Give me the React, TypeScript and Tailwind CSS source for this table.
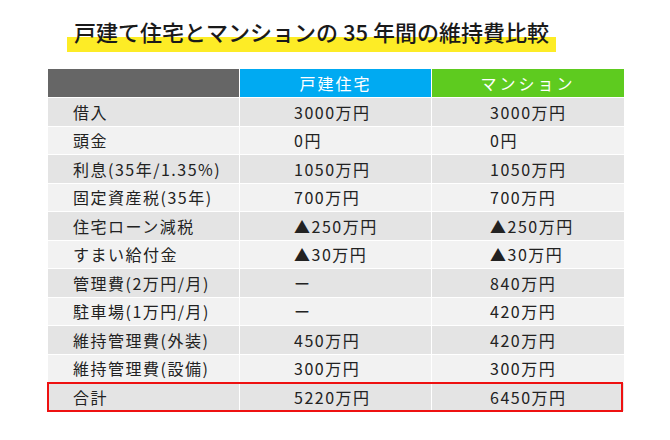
const rows = [
  ['借入', '3000万円', '3000万円'],
  ['頭金', '0円', '0円'],
  ['利息(35年/1.35%)', '1050万円', '1050万円'],
  ['固定資産税(35年)', '700万円', '700万円'],
  ['住宅ローン減税', '▲250万円', '▲250万円'],
  ['すまい給付金', '▲30万円', '▲30万円'],
  ['管理費(2万円/月)', 'ー', '840万円'],
  ['駐車場(1万円/月)', 'ー', '420万円'],
  ['維持管理費(外装)', '450万円', '420万円'],
  ['維持管理費(設備)', '300万円', '300万円'],
]

export default function App() {
  return (
    <div
      className="w-[670px] h-[440px] bg-white text-[#222]"
      style={{ fontFamily: '"Noto Sans CJK JP", "Noto Sans", sans-serif' }}
    >
      {/* Title */}
      <div className="pt-[16px] pl-[67px]">
        <div className="relative w-[489px] h-[36px]">
          <div className="absolute left-0 right-0 bottom-0 h-[15px] bg-[#fdec26]" />
          <h1 className="relative text-[22px] leading-[30px] font-medium text-center text-[#1a1a1a]">
            戸建て住宅とマンションの 35 年間の維持費比較
          </h1>
        </div>
      </div>

      {/* Table */}
      <div className="mt-[17px] ml-[48px] w-[574px] text-[16px] tracking-[1.5px]">
        <div className="grid grid-cols-[191px_191px_192px] gap-x-[1px] h-[28px]">
          <div className="bg-[#666666]" />
          <div className="bg-[#00aaf2] text-white flex items-center justify-center tracking-[2px]">
            戸建住宅
          </div>
          <div className="bg-[#5ecb1f] text-white flex items-center justify-center tracking-[3px]">
            マンション
          </div>
        </div>

        {rows.map((r, i) => (
          <div
            key={r[0]}
            className="grid grid-cols-[191px_191px_192px] gap-x-[1px] h-[28.5px] border-t border-white"
          >
            <div className={`${i % 2 === 0 ? 'bg-[#e4e4e4]' : 'bg-[#f2f2f2]'} flex items-center pl-[25px]`}>
              {r[0]}
            </div>
            <div className={`${i % 2 === 0 ? 'bg-[#e4e4e4]' : 'bg-[#f2f2f2]'} flex items-center pl-[54px]`}>
              {r[1]}
            </div>
            <div className={`${i % 2 === 0 ? 'bg-[#e4e4e4]' : 'bg-[#f2f2f2]'} flex items-center pl-[58px]`}>
              {r[2]}
            </div>
          </div>
        ))}

        {/* Total */}
        <div className="relative grid grid-cols-[191px_191px_192px] gap-x-[1px] h-[29px] border-t border-white">
          <div className="bg-[#e4e4e4] flex items-center pl-[25px]">合計</div>
          <div className="bg-[#e4e4e4] flex items-center pl-[54px]">5220万円</div>
          <div className="bg-[#e4e4e4] flex items-center pl-[58px]">6450万円</div>
          <div className="absolute inset-[-1px] border-2 border-[#ee1111]" />
        </div>
      </div>
    </div>
  )
}
